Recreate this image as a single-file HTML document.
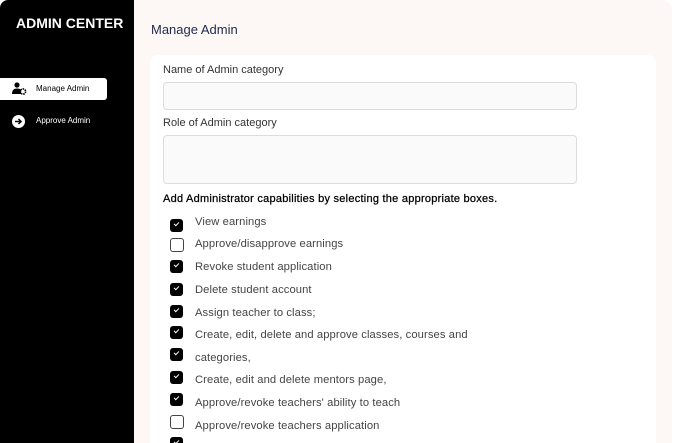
<!DOCTYPE html><html><head><style>
html,body{margin:0;width:679px;height:443px;overflow:hidden}
body{background:#fff;font-family:"Liberation Sans",sans-serif;position:relative}
.sb{position:absolute;left:0;top:0;width:134px;height:443px;background:#000;border-top-left-radius:8px}
.main{position:absolute;left:134px;top:0;width:538px;height:443px;background:#fdf7f6;border-top-right-radius:10px}
.card{position:absolute;left:150px;top:55px;width:506px;height:388px;background:#fff;border-radius:8px 8px 0 0}
.t{position:absolute;white-space:nowrap}
.in{position:absolute;left:163px;width:412px;background:#fafafa;border:1px solid #dcdcdc;border-radius:4px}
.cb{position:absolute;left:170px;width:13px;height:13px;border-radius:3px;background:#000}
.cb.o{background:#fff;border:1px solid #444;width:12px;height:12px}
.cb:not(.o)::after{content:"";position:absolute;left:4px;top:3px;width:4px;height:2px;border-left:1.3px solid #fff;border-bottom:1.3px solid #fff;transform:rotate(-45deg)}
.l{font-size:11.2px;color:#444;left:195px;letter-spacing:0.1px}
</style></head><body>
<div class="sb"></div>
<div class="t" style="left:16px;top:15px;color:#fff;font-size:14px;font-weight:bold">ADMIN CENTER</div>
<div style="position:absolute;left:0;top:78px;width:107px;height:22px;background:#fff;border-radius:0 3px 3px 0"></div>
<svg style="position:absolute;left:12px;top:82px" width="15" height="13" viewBox="0 0 15 13"><circle cx="5" cy="3" r="2.6"/><path d="M0 12 Q0 6.5 5 6.5 Q8 6.5 9 8 L9 12Z"/><circle cx="11" cy="9.5" r="2.6" fill="none" stroke="#000" stroke-width="1.6" stroke-dasharray="1.5 0.8"/></svg>
<div class="t" style="left:36px;top:84px;font-size:8px;color:#000">Manage Admin</div>
<svg style="position:absolute;left:12px;top:115px" width="13" height="13" viewBox="0 0 13 13"><circle cx="6.5" cy="6.5" r="6.5" fill="#fff"/><path d="M3 6.5h6M6.5 4l2.5 2.5-2.5 2.5" stroke="#000" stroke-width="1.5" fill="none"/></svg>
<div class="t" style="left:36px;top:116px;font-size:8px;color:#fff">Approve Admin</div>
<div class="main"></div>
<div class="t" style="left:151px;top:22px;font-size:13px;color:#1f2a4a">Manage Admin</div>
<div class="card"></div>
<div class="t" style="left:163px;top:64px;font-size:11px;color:#333">Name of Admin category</div>
<div class="in" style="top:82px;height:26px"></div>
<div class="t" style="left:163px;top:117px;font-size:11px;color:#333">Role of Admin category</div>
<div class="in" style="top:135px;height:47px"></div>
<div class="t" style="left:163px;top:193px;font-size:11px;color:#000;letter-spacing:0.25px;-webkit-text-stroke:0.25px #000">Add Administrator capabilities by selecting the appropriate boxes.</div>
<div class="cb" style="top:219px"></div><div class="t l" style="top:216px">View earnings</div>
<div class="cb o" style="top:238px"></div><div class="t l" style="top:238px">Approve/disapprove earnings</div>
<div class="cb" style="top:260px"></div><div class="t l" style="top:261px">Revoke student application</div>
<div class="cb" style="top:283px"></div><div class="t l" style="top:284px">Delete student account</div>
<div class="cb" style="top:305px"></div><div class="t l" style="top:307px">Assign teacher to class;</div>
<div class="cb" style="top:326px"></div><div class="t l" style="top:329px">Create, edit, delete and approve classes, courses and</div>
<div class="cb" style="top:348px"></div><div class="t l" style="top:352px">categories,</div>
<div class="cb" style="top:371px"></div><div class="t l" style="top:374px">Create, edit and delete mentors page,</div>
<div class="cb" style="top:393px"></div><div class="t l" style="top:397px">Approve/revoke teachers' ability to teach</div>
<div class="cb o" style="top:415px"></div><div class="t l" style="top:420px">Approve/revoke teachers application</div>
<div class="cb" style="top:437px"></div>
</body></html>
